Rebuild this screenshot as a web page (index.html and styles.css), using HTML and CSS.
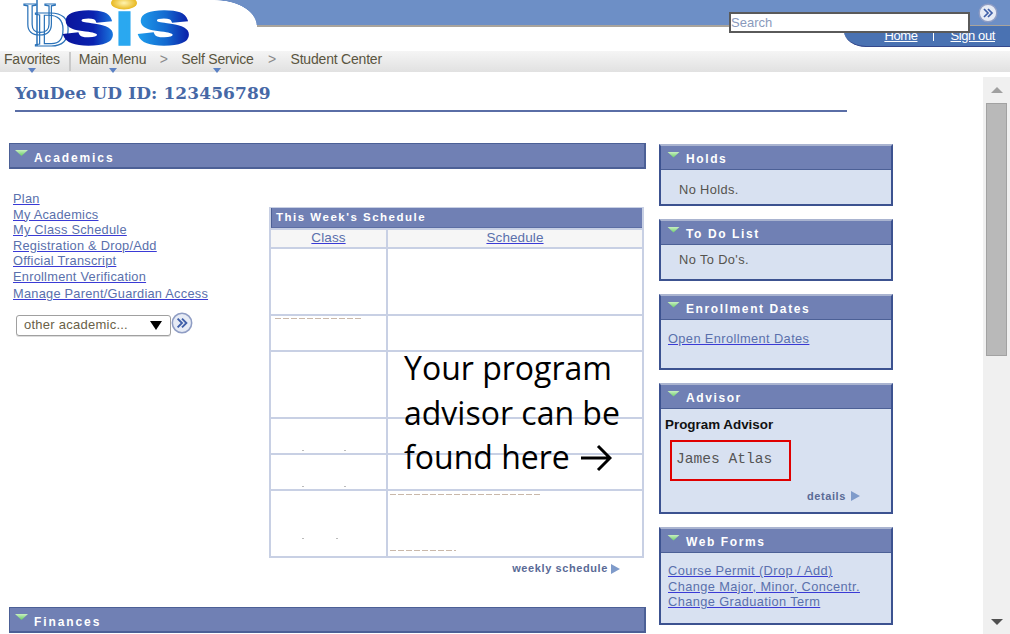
FILE: index.html
```html
<!DOCTYPE html>
<html>

<head>
    <link rel="stylesheet" href="styles.css">
</head>

<body>
    <div class="top">
        <svg class="logo" width="215" height="51" viewBox="0 0 215 51">
            <defs>
                <linearGradient id="s1" x1="0" x2="1" y1="0" y2="0">
                    <stop offset="0" stop-color="#0a149a" />
                    <stop offset="0.6" stop-color="#0a22b0" />
                    <stop offset="1" stop-color="#1a78de" />
                </linearGradient>
                <linearGradient id="s2" x1="0" x2="1" y1="0" y2="0">
                    <stop offset="0" stop-color="#1e9cec" />
                    <stop offset="0.55" stop-color="#1368cf" />
                    <stop offset="1" stop-color="#0a1ea8" />
                </linearGradient>
                <radialGradient id="dot">
                    <stop offset="0" stop-color="#fff4b0" />
                    <stop offset="1" stop-color="#e8b820" />
                </radialGradient>
            </defs>
            <text class="logo-ud" x="23" y="35" font-size="46">U</text>
            <text class="logo-ud" x="34" y="46" font-size="50">D</text>
            <path d="M37 0V46" stroke="#2a72b8" stroke-width="1.5" />
            <text class="logo-sis" x="64" y="44" font-size="46" textLength="49" lengthAdjust="spacingAndGlyphs" fill="url(#s1)" stroke="url(#s1)">S</text>
            <text class="logo-sis" x="117" y="44" font-size="44" textLength="15" lengthAdjust="spacingAndGlyphs" fill="#2aa8f0" stroke="#2aa8f0">I</text>
            <text class="logo-sis" x="139" y="44" font-size="46" textLength="50" lengthAdjust="spacingAndGlyphs" fill="url(#s2)" stroke="url(#s2)">S</text>
            <ellipse cx="124" cy="3" rx="13" ry="6.5" fill="url(#dot)" />
        </svg>
        <div class="top-right">
            <div class="band"></div>
            <div class="tabs">
                <a>Home</a>
                <span class="tabsep"></span>
                <a>Sign out</a>
            </div>
        </div>
        <div class="search">Search</div>
        <svg class="go go-top" width="20" height="20" viewBox="0 0 20 20">
            <use href="#gobtn" />
        </svg>
    </div>

    <div class="nav">
        <span class="crumb crumb-fav">Favorites</span>
        <span class="crumb-sep"></span>
        <span class="crumb crumb-menu">Main Menu</span>
        <span class="chev">&gt;</span>
        <span class="crumb crumb-self">Self Service</span>
        <span class="chev">&gt;</span>
        <span class="crumb crumb-last">Student Center</span>
    </div>

    <div class="page">
        <div class="content">
            <h1 class="title">YouDee UD ID: 123456789</h1>

            <div class="cols">
                <div class="left">
                    <div class="bar"><i class="tog"></i>Academics</div>
                    <div class="acad">
                        <div class="acad-links">
                            <a>Plan</a>
                            <a>My Academics</a>
                            <a>My Class Schedule</a>
                            <a>Registration &amp; Drop/Add</a>
                            <a>Official Transcript</a>
                            <a>Enrollment Verification</a>
                            <a class="last-link">Manage Parent/Guardian Access</a>
                            <div class="pick">
                                <div class="select">other academic...<i class="sel-arrow"></i></div>
                                <svg class="go go-pick" width="22" height="22" viewBox="0 0 20 20">
                                    <symbol id="gobtn" viewBox="0 0 20 20">
                                        <circle cx="10" cy="10" r="8.8" fill="#e6ebf5" stroke="#8f9dc4" stroke-width="1.4" />
                                        <path d="M6 6l4 4-4 4M10 6l4 4-4 4" fill="none" stroke="#3f5fa8" stroke-width="1.7" />
                                    </symbol>
                                    <use href="#gobtn" />
                                </svg>
                            </div>
                        </div>
                        <div class="sched-wrap">
                            <div class="sched">
                                <div class="sched-title">This Week's Schedule</div>
                                <table class="sched-table">
                                    <tr class="head">
                                        <th class="c1"><a>Class</a></th>
                                        <th><a>Schedule</a></th>
                                    </tr>
                                    <tr class="r1"><td></td><td></td></tr>
                                    <tr class="r2"><td><span class="scrap scrap-a"></span></td><td></td></tr>
                                    <tr class="r1"><td></td><td></td></tr>
                                    <tr class="r2"><td><span class="scrap scrap-b"></span></td><td></td></tr>
                                    <tr class="r2"><td><span class="scrap scrap-b"></span></td><td></td></tr>
                                    <tr class="r1"><td><span class="scrap scrap-b scrap-low"></span></td><td><span class="scrap scrap-c"></span><span class="scrap scrap-d"></span></td></tr>
                                </table>
                            </div>
                            <div class="callout">Your program<br>advisor can be<br>found here
                                <svg class="callout-arrow" width="32" height="28" viewBox="0 0 32 28">
                                    <path d="M1 14H30M18 2l12 12-12 12" fill="none" stroke="#000" stroke-width="3" />
                                </svg>
                            </div>
                            <div class="more weekly">weekly schedule<i class="more-arrow"></i></div>
                        </div>
                    </div>
                    <div class="bar bar-fin"><i class="tog"></i>Finances</div>
                </div>

                <div class="right">
                    <div class="panel">
                        <div class="panel-head"><i class="tog"></i>Holds</div>
                        <div class="panel-body h-holds"><p class="note">No Holds.</p></div>
                    </div>
                    <div class="panel">
                        <div class="panel-head"><i class="tog"></i>To Do List</div>
                        <div class="panel-body h-todo"><p class="note">No To Do's.</p></div>
                    </div>
                    <div class="panel">
                        <div class="panel-head"><i class="tog"></i>Enrollment Dates</div>
                        <div class="panel-body h-dates"><a>Open Enrollment Dates</a></div>
                    </div>
                    <div class="panel">
                        <div class="panel-head"><i class="tog"></i>Advisor</div>
                        <div class="panel-body h-advisor">
                            <b class="adv-label">Program Advisor</b>
                            <div class="adv-box">James Atlas</div>
                            <div class="more details">details<i class="more-arrow"></i></div>
                        </div>
                    </div>
                    <div class="panel">
                        <div class="panel-head"><i class="tog"></i>Web Forms</div>
                        <div class="panel-body h-forms">
                            <a>Course Permit (Drop / Add)</a>
                            <a>Change Major, Minor, Concentr.</a>
                            <a>Change Graduation Term</a>
                        </div>
                    </div>
                </div>
            </div>
        </div>

        <div class="scrollbar">
            <i class="sb-up"></i>
            <div class="sb-thumb"></div>
            <i class="sb-down"></i>
        </div>
    </div>
</body>

</html>
```

FILE: styles.css
```css
* {
    box-sizing: border-box;
}

html,
body {
    margin: 0;
    height: 634px;
    overflow: hidden;
    background: #fff;
    font-family: "Liberation Sans", Arial, sans-serif;
}

a {
    color: #5a70ac;
    text-decoration: underline;
    text-decoration-color: #3a3ad6;
}

/* header */
.top {
    display: flex;
    height: 51px;
    position: relative;
}

.logo {
    flex: none;
    overflow: hidden;
    filter: blur(0.5px);
}

.logo-ud {
    font-family: "Liberation Serif", serif;
    fill: none;
    stroke: #2a72b8;
    stroke-width: 1.2;
}

.logo-sis {
    font-family: "Liberation Sans", sans-serif;
    font-weight: bold;
    stroke-width: 3.5;
}

.top-right {
    flex: 1;
    display: flex;
    flex-direction: column;
    align-items: flex-end;
}

/* the white corner is cut out of the blue band */
.band {
    width: 100%;
    height: 27px;
    background:
        radial-gradient(ellipse 42px 26px at 0 26px, #fff 98%, transparent 100%) 0 0 / 42px 26px no-repeat,
        linear-gradient(#fff, #fff) 0 25px / 42px 2px no-repeat,
        linear-gradient(#6d8fc6 25px, #a9a49c 25px);
}

.tabs {
    display: flex;
    justify-content: flex-end;
    align-items: center;
    gap: 16px;
    width: 166px;
    height: 21px;
    margin-top: -1px;
    padding: 0 15px 2px 0;
    background: #4a72b2;
    border-bottom: 1px solid #34488c;
    border-bottom-left-radius: 22px 16px;
    font-size: 13px;
    letter-spacing: -0.4px;
}

.tabs a {
    color: #fff;
    text-decoration-color: #fff;
}

.tabsep {
    width: 1px;
    height: 12px;
    background: #fff;
}

.search {
    position: absolute;
    left: 729px;
    top: 12px;
    width: 241px;
    height: 21px;
    padding: 1px 0 0;
    background: #fff;
    border: 2px solid #5a5a5a;
    color: #8a9abc;
    font-size: 13px;
}

.go-top {
    position: absolute;
    left: 978px;
    top: 3px;
}

/* breadcrumb */
.nav {
    display: flex;
    align-items: center;
    height: 21px;
    padding: 0 0 5px 4px;
    background: linear-gradient(#f5f5f5, #e1e1e1);
    color: #5a5540;
    font-size: 14px;
    letter-spacing: -0.2px;
}

.crumb {
    position: relative;
}

.crumb-fav:after,
.crumb-menu:after,
.crumb-self:after {
    content: "";
    position: absolute;
    left: 50%;
    bottom: -6px;
    margin-left: -4px;
    border: 4px solid transparent;
    border-top: 5px solid #5a80c4;
    border-bottom: 0;
}

.crumb-sep {
    width: 2px;
    height: 19px;
    margin: 5px 8px 0 9px;
    background: #c9c9c9;
}

.chev {
    text-align: center;
    color: #8a8a8a;
    font-size: 14px;
}

.crumb-menu + .chev {
    width: 35px;
}

.crumb-self + .chev {
    width: 37px;
}

/* page */
.page {
    display: flex;
    height: 562px;
}

.content {
    flex: 1;
    min-width: 0;
    padding-left: 9px;
}

.title {
    width: 832px;
    height: 40px;
    margin: 0 0 0 6px;
    padding: 10px 0 0;
    border-bottom: 2px solid #5a6ea6;
    color: #4668a6;
    font-family: "DejaVu Serif", serif;
    font-size: 17px;
    font-weight: bold;
    line-height: 22px;
    letter-spacing: 0.1px;
}

.cols {
    display: flex;
    gap: 13px;
    margin-top: 31px;
}

.left {
    width: 637px;
}

.right {
    display: flex;
    flex-direction: column;
    gap: 13px;
    width: 234px;
    margin-top: 1px;
}

.bar,
.panel-head {
    display: flex;
    align-items: center;
    color: #fff;
    background: #7080b4;
    font-size: 12px;
    font-weight: bold;
    letter-spacing: 1.6px;
}

.bar {
    height: 26px;
    padding: 4px 0 0 5px;
    border: 1px solid #4c6096;
    border-width: 1px 2px 2px 1px;
    letter-spacing: 1.9px;
}

.tog {
    flex: none;
    width: 13px;
    height: 6px;
    margin: 0 6px 9px 0;
    background: linear-gradient(#c8f0c0, #66cc66);
    clip-path: polygon(0 0, 100% 0, 50% 100%);
}

.acad {
    display: flex;
    height: 438px;
}

.acad-links {
    display: flex;
    flex-direction: column;
    align-items: flex-start;
    width: 260px;
    padding: 22px 0 0 4px;
    font-size: 12.8px;
    line-height: 15.5px;
    letter-spacing: 0.25px;
}

.last-link {
    margin-top: 2px;
}

.pick {
    display: flex;
    align-items: flex-start;
    margin: 13px 0 0 3px;
}

.select {
    display: flex;
    align-items: center;
    justify-content: space-between;
    width: 155px;
    height: 21px;
    padding: 0 8px 0 7px;
    background: #fff;
    border: 1px solid #a0a0a0;
    border-radius: 3px;
    box-shadow: 0 1px 0 #ddd;
    color: #6a5f48;
    font-size: 13px;
}

.sel-arrow {
    border: 5px solid transparent;
    border-top: 9px solid #000;
    border-bottom: 0;
    border-left-width: 6px;
    border-right-width: 6px;
}

.go {
    flex: none;
}

.go-pick {
    margin: -3px 0 0 0;
}

.sched-wrap {
    position: relative;
    width: 375px;
    margin-top: 38px;
}

.sched {
    border: 2px solid #c8d0e4;
    border-top-width: 1px;
    height: 351px;
}

.sched-title {
    height: 20px;
    padding: 2px 0 0 4px;
    background: #7080b4;
    border-left: 1px solid #4c6096;
    border-bottom: 1px solid #5c6ea4;
    color: #fff;
    font-size: 11.5px;
    font-weight: bold;
    letter-spacing: 1.5px;
    line-height: 15px;
}

.sched-table {
    width: 100%;
    border-collapse: collapse;
    table-layout: fixed;
}

.sched-table th,
.sched-table td {
    padding: 0;
    border: 2px solid #c8d0e4;
    vertical-align: top;
}

.sched-table th:first-child,
.sched-table td:first-child {
    border-left: 0;
}

.sched-table th:last-child,
.sched-table td:last-child {
    border-right: 0;
}

.sched-table tr:last-child td {
    border-bottom: 0;
}

.c1 {
    width: 116px;
}

.head {
    height: 19px;
    background: #f6f6f6;
}

.sched-table .head th {
    height: 19px;
    padding-bottom: 2px;
    font-size: 13.5px;
    font-weight: normal;
    letter-spacing: 0.1px;
    line-height: 15px;
    vertical-align: middle;
}

.r1 {
    height: 67px;
}

.r2 {
    height: 36px;
}

.scrap {
    display: block;
    height: 1px;
    margin-top: 2px;
    background: repeating-linear-gradient(90deg, #c9b8aa 0 6px, transparent 6px 8px);
}

.scrap-a {
    width: 86px;
    margin-left: 4px;
}

.scrap-b {
    width: 44px;
    margin: 31px 0 0 31px;
    background: linear-gradient(90deg, #bbb 0 2px, transparent 2px 42px, #bbb 42px);
}

.scrap-low {
    width: 36px;
    margin-top: 47px;
    background: linear-gradient(90deg, #bbb 0 2px, transparent 2px 34px, #bbb 34px);
}

.scrap-c {
    width: 150px;
    margin: 3px 0 0 2px;
}

.scrap-d {
    width: 66px;
    margin: 55px 0 0 2px;
}

.callout {
    position: absolute;
    left: 135px;
    top: 139px;
    color: #000;
    font-family: "Open Sans", sans-serif;
    font-size: 32px;
    line-height: 44.5px;
    white-space: nowrap;
}

.callout-arrow {
    margin-left: 2px;
    vertical-align: -3px;
}

.more {
    display: flex;
    align-items: center;
    justify-content: flex-end;
    color: #5a6a96;
    font-size: 11px;
    font-weight: bold;
    letter-spacing: 0.6px;
}

.weekly {
    margin: 4px 24px 0 0;
}

.more-arrow {
    margin: 2px 0 0 3px;
    border: 5px solid transparent;
    border-left: 9px solid #7f9bca;
    border-right: 0;
}

.details {
    margin: 9px 27px 0 0;
}

.details .more-arrow {
    margin: -1px 0 0 5px;
}

/* right side panels */
.panel {
    border: 2px solid #3c5290;
    border-top-color: #aab4d0;
    background: #d8e1f1;
}

.panel-head {
    height: 24px;
    padding: 3px 0 0 6px;
    border-bottom: 1px solid #4c6096;
}

.panel-body {
    padding: 0 7px;
    font-size: 12.8px;
    letter-spacing: 0.4px;
}

.panel-body a {
    display: block;
    line-height: 15.5px;
}

.h-holds {
    height: 34px;
    padding-top: 13px;
}

.h-todo {
    height: 34px;
    padding-top: 8px;
}

.h-dates {
    height: 48px;
    padding-top: 11px;
}

.h-advisor {
    height: 103px;
    padding: 9px 4px 0;
}

.h-forms {
    height: 70px;
    padding-top: 10px;
}

.note {
    margin: 0 0 0 11px;
    color: #55534e;
    line-height: 14px;
}

.adv-label {
    display: block;
    color: #111;
    font-size: 13.4px;
    line-height: 14px;
    letter-spacing: 0;
}

.adv-box {
    width: 121px;
    height: 41px;
    margin: 8px 0 0 5px;
    padding: 9px 0 0 4px;
    border: 2px solid #e00000;
    color: #555;
    font-family: "Liberation Mono", monospace;
    font-size: 14.6px;
    line-height: 17px;
    letter-spacing: 0;
}

/* scrollbar */
.scrollbar {
    flex: none;
    display: flex;
    flex-direction: column;
    align-items: center;
    width: 27px;
    height: 557px;
    margin-top: 5px;
    background: #f0f0f0;
}

.sb-up {
    margin-top: 10px;
    border: 5px solid transparent;
    border-bottom: 6px solid #a0a0a0;
    border-top: 0;
    border-left-width: 6px;
    border-right-width: 6px;
}

.sb-thumb {
    width: 21px;
    height: 253px;
    margin-top: 10px;
    background: #b9b9b9;
    border: 1px solid #a2a2a2;
}

.sb-down {
    margin-top: auto;
    margin-bottom: 9px;
    border: 5px solid transparent;
    border-top: 6px solid #505050;
    border-bottom: 0;
    border-left-width: 6px;
    border-right-width: 6px;
}
```
